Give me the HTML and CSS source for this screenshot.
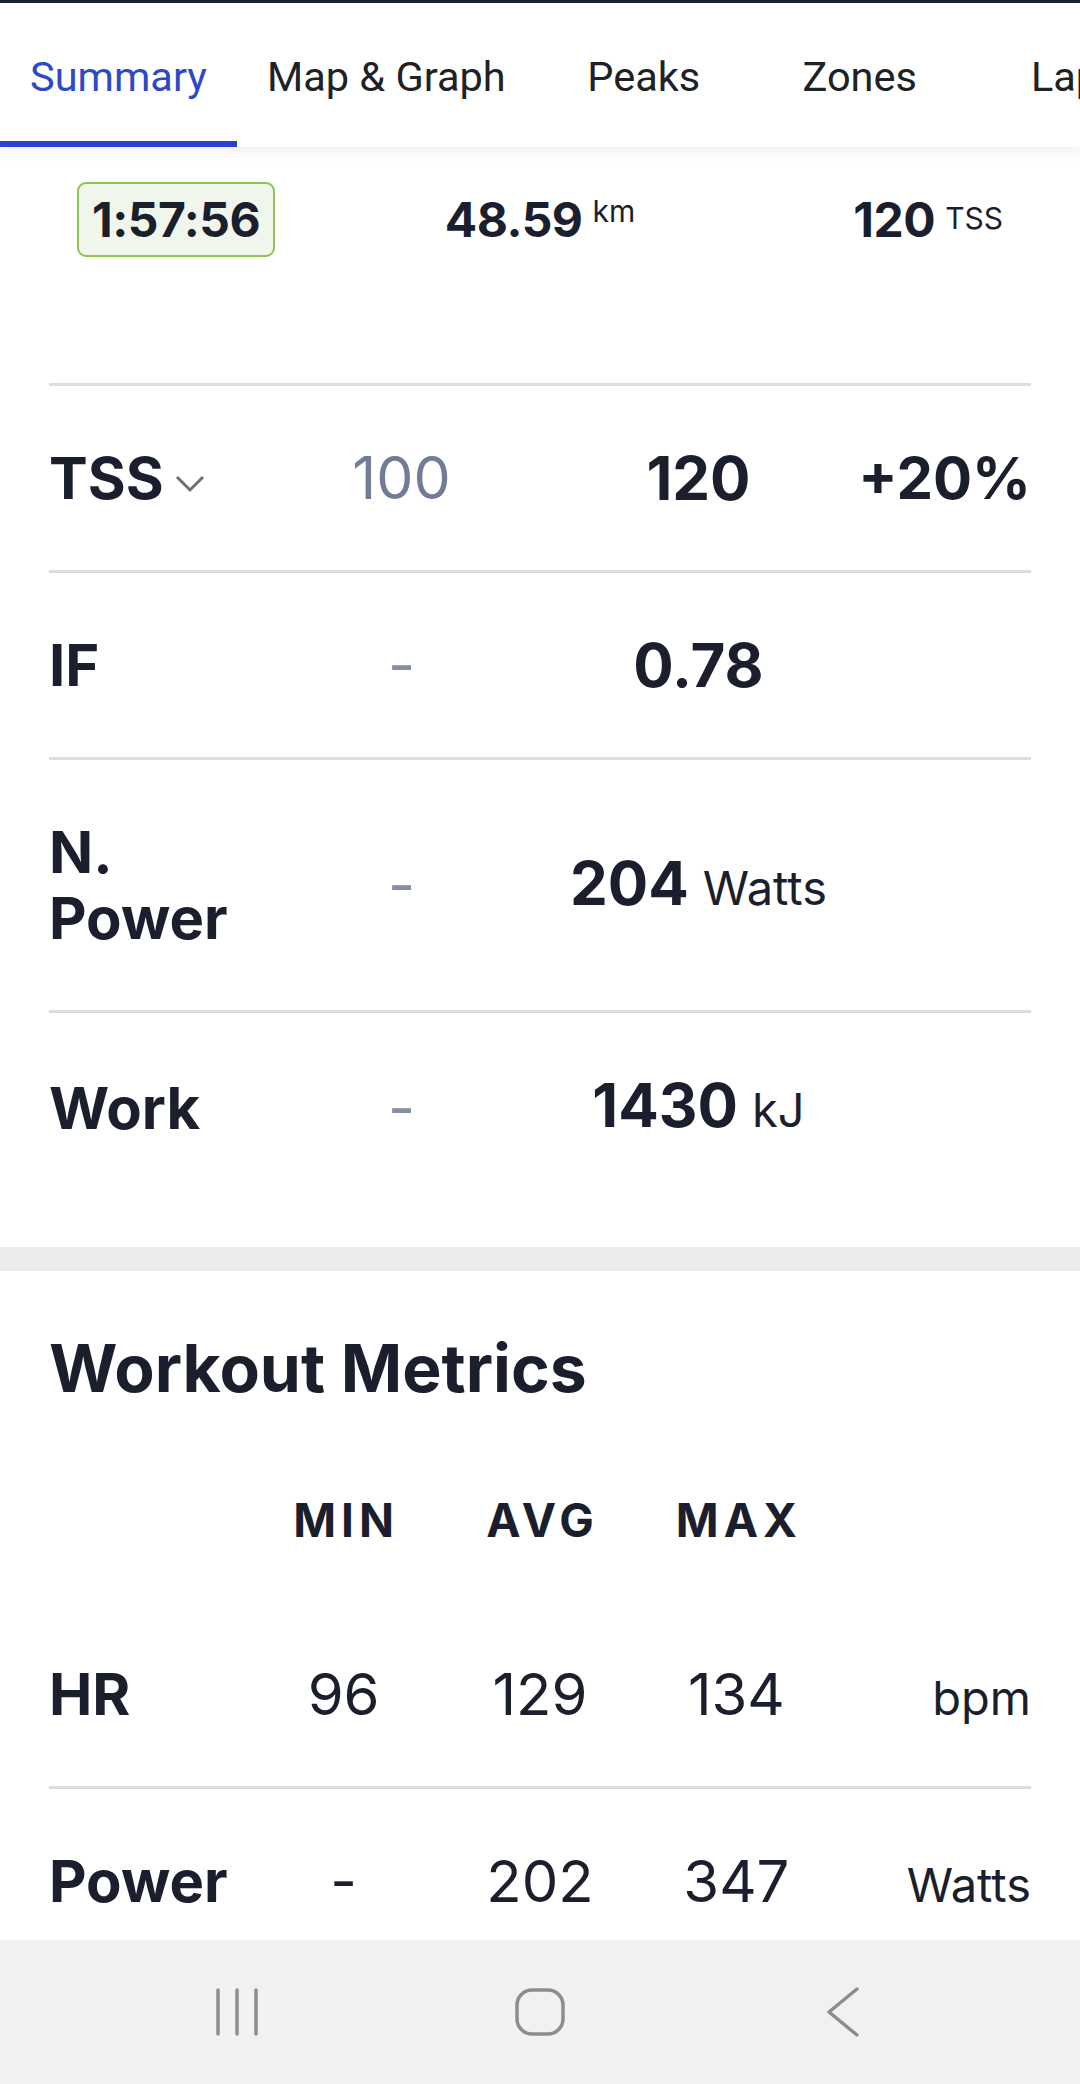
FILE: index.html
```html
<!DOCTYPE html>
<html lang="en">
<head>
  <meta charset="UTF-8" />
  <title>Workout Summary</title>
  <link rel="stylesheet" href="styles.css">
</head>
<body>
  <div class="screen">
    <div class="status-edge"></div>

    <nav class="tabs">
      <a class="tab active">Summary</a>
      <a class="tab">Map &amp; Graph</a>
      <a class="tab">Peaks</a>
      <a class="tab">Zones</a>
      <a class="tab">Laps</a>
    </nav>

    <main class="content">
      <section class="summary">
        <div class="totals">
          <div class="total time">1:57:56</div>
          <div class="total dist"><span class="num">48.59</span><span class="unit km">km</span></div>
          <div class="total load"><span class="num">120</span><span class="unit tss">TSS</span></div>
        </div>

        <div class="compare">
          <div class="cmp-row">
            <div class="label">TSS <svg class="caret" width="30" height="20" viewBox="0 0 30 20"><polyline points="2,4 15,17 28,4" /></svg></div>
            <div class="planned">100</div>
            <div class="actual">120</div>
            <div class="diff">+20%</div>
          </div>
          <div class="cmp-row">
            <div class="label">IF</div>
            <div class="planned dash">-</div>
            <div class="actual">0.78</div>
            <div class="diff"></div>
          </div>
          <div class="cmp-row">
            <div class="label">N.<br>Power</div>
            <div class="planned dash">-</div>
            <div class="actual">204<span class="unit">Watts</span></div>
            <div class="diff"></div>
          </div>
          <div class="cmp-row">
            <div class="label">Work</div>
            <div class="planned dash">-</div>
            <div class="actual">1430<span class="unit">kJ</span></div>
            <div class="diff"></div>
          </div>
        </div>
      </section>

      <div class="band"></div>

      <section class="workout">
        <h2>Workout Metrics</h2>
        <div class="stat-head">
          <div></div>
          <div>MIN</div>
          <div>AVG</div>
          <div>MAX</div>
          <div></div>
        </div>
        <div class="stat-row">
          <div class="label">HR</div>
          <div>96</div>
          <div>129</div>
          <div>134</div>
          <div class="unit">bpm</div>
        </div>
        <div class="stat-row">
          <div class="label">Power</div>
          <div>-</div>
          <div>202</div>
          <div>347</div>
          <div class="unit">Watts</div>
        </div>
      </section>
    </main>

    <div class="sys-nav">
      <div class="sys-btn">
        <svg width="44" height="50" viewBox="0 0 44 50"><line x1="3" y1="3" x2="3" y2="47" /><line x1="22" y1="3" x2="22" y2="47" /><line x1="41" y1="3" x2="41" y2="47" /></svg>
      </div>
      <div class="sys-btn">
        <svg width="52" height="50" viewBox="0 0 52 50"><rect x="3" y="3" width="46" height="44" rx="15" /></svg>
      </div>
      <div class="sys-btn">
        <svg width="36" height="52" viewBox="0 0 36 52"><polyline points="32,3 4,26 32,49" /></svg>
      </div>
    </div>
  </div>
</body>
</html>
```

FILE: styles.css
```css
body {
  margin: 0;
  background-color: #fff;
  font-family: Inter, 'Noto Sans', sans-serif;
  color: #1b1f2d;
}

.screen {
  height: 2084px;
  display: flex;
  flex-direction: column;
  overflow: hidden;
}

.status-edge {
  height: 3px;
  background-color: #1a2131;
  flex-shrink: 0;
}

/* tab strip */
.tabs {
  height: 144px;
  display: flex;
  flex-shrink: 0;
  background-color: #fff;
  box-shadow: 0 3px 14px rgba(0,0,0,0.08);
  position: relative;
  z-index: 2;
  overflow: hidden;
}

.tab {
  flex-shrink: 0;
  min-width: 216px;
  box-sizing: border-box;
  padding: 8px 30px 0;
  border-bottom: 6px solid transparent;
  display: flex;
  align-items: center;
  justify-content: center;
  font-family: Roboto, sans-serif;
  font-size: 41.5px;
  color: #202124;
  white-space: nowrap;
}

.tab.active {
  color: #2e48c6;
  border-bottom-color: #2943d0;
}

.content {
  flex: 1;
  overflow: hidden;
}

/* totals */
.totals {
  display: grid;
  grid-template-columns: 1fr auto 1fr;
  align-items: center;
  padding: 35px 77px 0;
}

.total {
  font-size: 48px;
  font-weight: 700;
  letter-spacing: -0.5px;
  line-height: 71px;
  white-space: nowrap;
}

.total.time {
  justify-self: start;
  height: 75px;
  box-sizing: border-box;
  padding: 0 13px;
  border: 2px solid #8cc652;
  border-radius: 9px;
  background-color: #f1f6ec;
}

.total.load {
  justify-self: end;
}

.total .unit {
  font-size: 30px;
  font-weight: 400;
  letter-spacing: 0;
  line-height: 1;
  margin-left: 10px;
}

.total .km {
  vertical-align: 15px;
}

.total .tss {
  vertical-align: 8px;
}

/* planned vs actual */
.compare {
  margin: 126px 49px 45px;
  border-top: 3px solid #d9dde4;
}

.cmp-row {
  display: grid;
  grid-template-columns: 204px 297px 297px 1fr;
  align-items: center;
  padding: 59px 0;
  border-bottom: 3px solid #d9dde4;
  font-size: 58px;
  line-height: 66px;
}

.cmp-row:last-child {
  border-bottom: none;
}

.cmp-row .label {
  font-weight: 700;
  white-space: nowrap;
}

.caret {
  margin-left: -2px;
  vertical-align: 6px;
}

.caret polyline {
  fill: none;
  stroke: #707070;
  stroke-width: 3;
}

.planned {
  text-align: center;
  font-size: 59px;
  color: #717c97;
}

.planned.dash {
  color: #868ea2;
}

.actual {
  text-align: center;
  font-size: 60px;
  font-weight: 700;
  white-space: nowrap;
}

.actual .unit {
  font-size: 47px;
  font-weight: 400;
  margin-left: 14px;
}

.diff {
  text-align: right;
  font-weight: 700;
}

.band {
  height: 24px;
  background-color: #ececec;
}

/* workout metrics */
.workout {
  padding: 57px 49px 0;
}

.workout h2 {
  margin: 0;
  font-size: 66px;
  font-weight: 700;
  line-height: 80px;
}

.stat-head, .stat-row {
  display: grid;
  grid-template-columns: repeat(5, 1fr);
  text-align: center;
}

.stat-head {
  margin-top: 84px;
  font-size: 46px;
  font-weight: 700;
  line-height: 56px;
  letter-spacing: 5px;
  text-indent: 5px;
}

.stat-row {
  align-items: baseline;
  padding: 57px 0 53px;
  font-size: 58px;
  line-height: 70px;
}

.stat-head + .stat-row {
  margin-top: 54px;
  border-bottom: 3px solid #d9dde4;
}

.stat-row .label {
  text-align: left;
  font-weight: 700;
}

.stat-row .unit {
  text-align: right;
  font-size: 47px;
}

/* android navigation bar */
.sys-nav {
  height: 144px;
  flex-shrink: 0;
  background-color: #f0f1f3;
  display: flex;
  justify-content: center;
  align-items: center;
  gap: 203px;
}

.sys-btn {
  width: 100px;
  display: flex;
  justify-content: center;
}

.sys-btn svg line, .sys-btn svg rect, .sys-btn svg polyline {
  fill: none;
  stroke: #8d8d8d;
  stroke-width: 3.5;
  stroke-linecap: round;
  stroke-linejoin: round;
}
```
